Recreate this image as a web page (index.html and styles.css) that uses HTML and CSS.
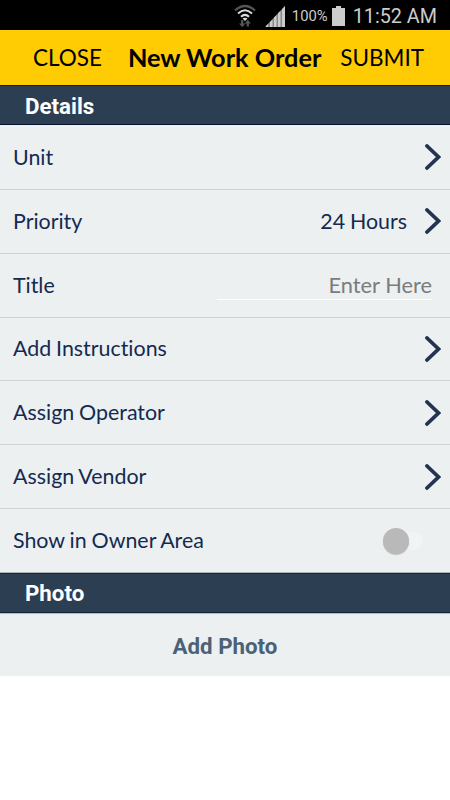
FILE: index.html
```
<!DOCTYPE html>
<html lang="en">

<head>
    <meta charset="UTF-8">
    <meta name="viewport" content="width=device-width, initial-scale=1.0">
    <title>New Work Order</title>
    <link rel="stylesheet" href="styles.css">
</head>

<body>
    <!-- Status bar -->
    <div class="status-bar">
        <svg class="wifi" width="22" height="24" viewBox="0 0 22 24" fill="none">
            <path d="M1 6.5Q11 -2.5 21 6.5" stroke="#555" stroke-width="2.2" />
            <path d="M4 9.500Q11 3 18 9.500M7 12.800Q11 9 15 12.800" stroke="#ddd" stroke-width="2" />
            <path d="M8.500 14.500Q11 12.800 13.500 14.500L11 17Z" fill="#ddd" />
            <path d="M8.2 16v5M13.8 22.500v-4" stroke="#555" stroke-width="2.2" />
            <path d="M5 19.500h6.400l-3.200 3.800zM10.600 19.500h6.400l-3.200-3.800z" fill="#555" />
        </svg>
        <svg class="signal" width="20" height="21" viewBox="0 0 20 21">
            <path d="M0 21L20 0V21Z" fill="#888" />
            <path d="M1 21v-1l2-2v3zM5 21v-5l2.500-2.600V21zM9 21V11.500l2.500-2.600V21zM13 21V7.300L15.500 4.700V21zM17 21V3.200l3-3.200v21z" fill="#ccc" />
        </svg>
        <span class="percent">100%</span>
        <svg class="battery" width="13" height="20" viewBox="0 0 13 20">
            <path d="M4 0h5v2h4v18H0V2h4z" fill="#ccc" />
        </svg>
        <span class="clock">11:52 AM</span>
    </div>

    <header>
        <button>CLOSE</button>
        <h1>New Work Order</h1>
        <button>SUBMIT</button>
    </header>

    <main>
        <h2 class="section-title">Details</h2>
        <div class="details">
            <div class="row">
                <span>Unit</span>
                <svg class="chevron" viewBox="0 0 16 26"><path d="M2 2L13.500 13L2 24" /></svg>
            </div>
            <div class="row">
                <span>Priority</span>
                <span class="value">24 Hours</span>
                <svg class="chevron" viewBox="0 0 16 26"><path d="M2 2L13.500 13L2 24" /></svg>
            </div>
            <div class="row">
                <label for="title">Title</label>
                <input type="text" id="title" placeholder="Enter Here">
            </div>
            <div class="row">
                <span>Add Instructions</span>
                <svg class="chevron" viewBox="0 0 16 26"><path d="M2 2L13.500 13L2 24" /></svg>
            </div>
            <div class="row">
                <span>Assign Operator</span>
                <svg class="chevron" viewBox="0 0 16 26"><path d="M2 2L13.500 13L2 24" /></svg>
            </div>
            <div class="row">
                <span>Assign Vendor</span>
                <svg class="chevron" viewBox="0 0 16 26"><path d="M2 2L13.500 13L2 24" /></svg>
            </div>
            <div class="row">
                <span>Show in Owner Area</span>
                <div class="switch">
                    <div class="knob"></div>
                </div>
            </div>
        </div>

        <h2 class="section-title photo-title">Photo</h2>
        <button class="add-photo">Add Photo</button>
    </main>
</body>

</html>
```
FILE: styles.css
```
* {
    box-sizing: border-box;
}

body {
    margin: 0;
    background-color: #fff;
    font-family: Lato, sans-serif;
    font-variant-ligatures: none;
    color: #142a50;
}

button {
    padding: 0;
    border: none;
    background: none;
    font-family: inherit;
    cursor: pointer;
}

/* Status Bar */
.status-bar {
    display: flex;
    align-items: center;
    justify-content: flex-end;
    height: 30px;
    padding: 2px 13px 0 0;
    background-color: #000;
    color: #ccc;
    font-family: Roboto, sans-serif;
}

.signal {
    margin-left: 9px;
}

.percent {
    margin-left: 7px;
    font-size: 14.8px;
}

.battery {
    margin-left: 4px;
}

.clock {
    margin-left: 8px;
    font-size: 19.8px;
}

/* Header */
header {
    display: flex;
    align-items: center;
    justify-content: space-between;
    height: 55px;
    padding: 0 26px 0 33px;
    background-color: #ffcc03;
    color: #000;
}

header h1 {
    margin: 0 0 0 7px;
    padding-bottom: 2px;
    font-size: 25.3px;
    white-space: nowrap;
}

header button {
    padding-bottom: 1px;
    font-size: 22.5px;
    color: #000;
}

/* Sections */
.section-title {
    height: 40px;
    margin: 0;
    padding-left: 25px;
    border-top: 1px solid #0b1950;
    border-bottom: 1px solid #08132d;
    background-color: #2c3e52;
    color: #fff;
    font-family: Roboto, sans-serif;
    font-size: 22.3px;
    line-height: 41px;
}

.photo-title {
    border-color: #10283f;
}

.details {
    display: grid;
    grid-template-rows: repeat(7, 1fr);
    height: 448px;
    padding-top: 1px;
    background-color: #ecf0f1;
}

.row {
    display: flex;
    align-items: center;
    justify-content: space-between;
    padding: 0 9px 0 13px;
    border-bottom: 1px solid #ced3d4;
    font-size: 21.4px;
    word-spacing: -0.6px;
}

.row:last-child {
    border-bottom-color: #aeb5b7;
}

.row > span,
.row label {
    padding-bottom: 1px;
}

.value {
    margin-left: auto;
    margin-right: 18px;
}

.chevron {
    width: 16px;
    height: 26px;
    fill: none;
    stroke: #22344f;
    stroke-width: 3.8;
    stroke-linecap: round;
}

.row input {
    width: 215px;
    height: 30px;
    margin-right: 9px;
    padding: 0 0 1px;
    border: none;
    border-bottom: 1px solid #fff;
    background: none;
    font: inherit;
    font-size: 21.8px;
    text-align: right;
}

.row input::placeholder {
    color: #7a7c7d;
}

/* Toggle */
.switch {
    display: flex;
    align-items: center;
    width: 40px;
    height: 18px;
    margin-right: 18px;
    border-radius: 9px;
    background-color: #f1f4f5;
}

.knob {
    width: 26px;
    height: 26px;
    border-radius: 50%;
    background-color: #b9b9b9;
    box-shadow: 0 1px 1px rgba(0, 0, 0, 0.2);
}

.photo-title {
    line-height: 39px;
}

.add-photo {
    display: block;
    width: 100%;
    height: 63px;
    padding-top: 2px;
    border-top: 1px solid #b4bbbe;
    background-color: #ecf0f1;
    color: #4b6176;
    font-family: Roboto, sans-serif;
    font-size: 22.3px;
    font-weight: bold;
}
```
